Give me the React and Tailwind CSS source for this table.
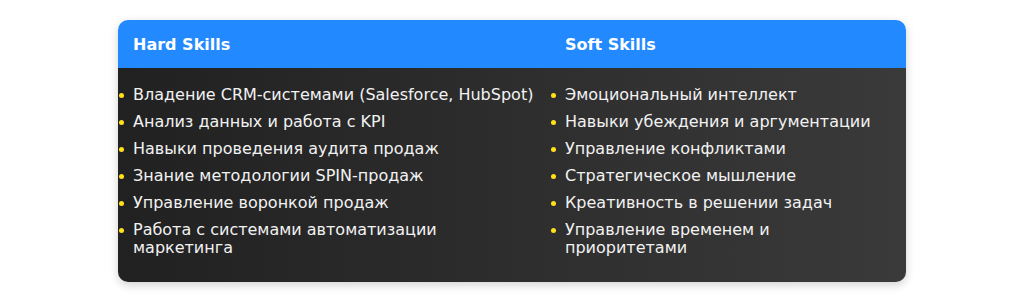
import React from "react";

const hard = [
  "Владение CRM-системами (Salesforce, HubSpot)",
  "Анализ данных и работа с KPI",
  "Навыки проведения аудита продаж",
  "Знание методологии SPIN-продаж",
  "Управление воронкой продаж",
  "Работа с системами автоматизации маркетинга",
];
const soft = [
  "Эмоциональный интеллект",
  "Навыки убеждения и аргументации",
  "Управление конфликтами",
  "Стратегическое мышление",
  "Креативность в решении задач",
  "Управление временем и приоритетами",
];

function List({ items }) {
  return (
    <ul className="pl-0 pt-[18px] pb-[16px]">
      {items.map((t) => (
        <li key={t} className="relative mb-[9px] leading-[18px] text-[16px] text-[#f2f2f2]">
          <span className="absolute -left-[14px] top-[7px] w-[5px] h-[5px] rounded-full bg-[#ffe11a]" />
          {t}
        </li>
      ))}
    </ul>
  );
}

export default function App() {
  return (
    <div className="w-[1024px] h-[302px] bg-white pt-[20px] pl-[118px]" style={{ fontFamily: '"DejaVu Sans", sans-serif' }}>
      <div className="w-[788px] rounded-[10px] overflow-hidden shadow-[0_3px_10px_rgba(0,0,0,0.18)]">
        <div className="grid grid-cols-[432px_356px] bg-[#2389ff] text-white font-bold text-[16px] leading-[18px]">
          <div className="pl-[15px] pt-[16px] pb-[14px]">Hard Skills</div>
          <div className="pl-[15px] pt-[16px] pb-[14px]">Soft Skills</div>
        </div>
        <div className="grid grid-cols-[432px_356px] bg-gradient-to-r from-[#212121] to-[#3a3a3a]">
          <div className="pl-[15px] pr-[15px]">
            <List items={hard} />
          </div>
          <div className="pl-[15px] pr-[15px]">
            <List items={soft} />
          </div>
        </div>
      </div>
    </div>
  );
}
